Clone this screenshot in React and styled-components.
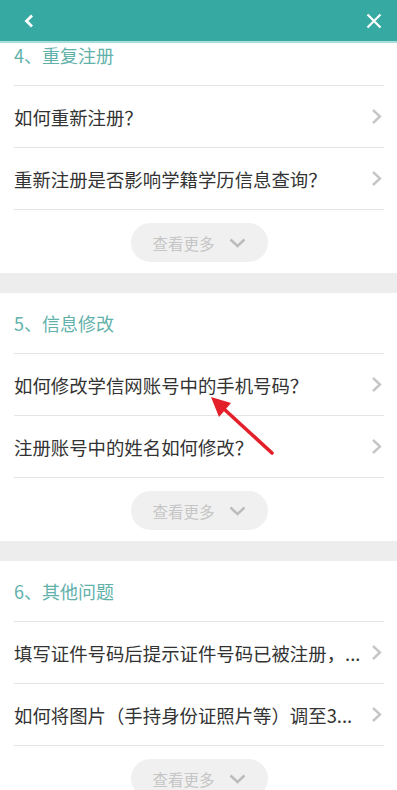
import React from "react";
import styled, { createGlobalStyle } from "styled-components";

const Global = createGlobalStyle`
  html, body { margin: 0; padding: 0; }
  body {
    font-family: "Noto Sans CJK SC", "Noto Sans", "Liberation Sans", sans-serif;
    background: #ffffff;
  }
  * { box-sizing: border-box; }
`;

const Page = styled.div`
  position: relative;
  width: 397px;
  height: 790px;
  overflow: hidden;
  display: flex;
  flex-direction: column;
  gap: 20px;
  background: #ededed;
`;

const TopArea = styled.div`
  display: flex;
  flex-direction: column;
  background: #fff;
`;

const Header = styled.header`
  height: 43px;
  flex-shrink: 0;
  background: #36a9a2;
  border-bottom: 2px solid #aadcd8;
  display: flex;
  align-items: center;
  justify-content: space-between;
  padding: 0 15px 0 24px;
`;

const IconBtn = styled.span`
  display: flex;
  align-items: center;
  justify-content: center;
`;

const Section = styled.section`
  background: #fff;
  display: flex;
  flex-direction: column;
  flex-shrink: 0;
`;

const List = styled.div`
  margin: 0 13px 0 14px;
  display: flex;
  flex-direction: column;
`;

const Title = styled.div`
  height: ${(p) => (p.$clipped ? "43px" : "61px")};
  display: flex;
  align-items: ${(p) => (p.$clipped ? "flex-start" : "center")};
  border-bottom: 1px solid #e4e4e4;
  font-size: 18px;
  line-height: 24px;
  color: #62b2ab;
  padding-bottom: ${(p) => (p.$clipped ? "0" : "1px")};
`;

const Row = styled.div`
  height: 62px;
  display: flex;
  align-items: center;
  justify-content: space-between;
  border-bottom: 1px solid #e4e4e4;
  gap: 4px;
`;

const RowText = styled.span`
  flex: 1;
  min-width: 0;
  font-size: 18.4px;
  color: #333333;
  white-space: nowrap;
  overflow: hidden;
`;

const Chevron = styled.svg`
  flex-shrink: 0;
  margin-right: 2px;
`;

const MoreArea = styled.div`
  height: 63px;
  display: flex;
  justify-content: center;
  padding-top: 13px;
`;

const MoreButton = styled.div`
  width: 137px;
  height: 39px;
  border-radius: 20px;
  background: #f0f0f0;
  display: flex;
  align-items: center;
  justify-content: center;
  gap: 14px;
  font-size: 15.5px;
  color: #c6c6c6;
`;

const Arrow = styled.svg`
  position: absolute;
  left: 0;
  top: 0;
  pointer-events: none;
`;

const RightChevron = () => (
  <Chevron width="11" height="17" viewBox="0 0 11 17">
    <polyline points="2,2 9,8.5 2,15" fill="none" stroke="#c6c6c6" strokeWidth="2.4" />
  </Chevron>
);

const DownChevron = () => (
  <svg width="17" height="10" viewBox="0 0 17 10">
    <polyline points="1.5,1.5 8.5,8 15.5,1.5" fill="none" stroke="#bcbcbc" strokeWidth="2.4" />
  </svg>
);

const sections = [
  {
    title: "4、重复注册",
    clipped: true,
    items: ["如何重新注册？", "重新注册是否影响学籍学历信息查询？"],
  },
  {
    title: "5、信息修改",
    items: ["如何修改学信网账号中的手机号码？", "注册账号中的姓名如何修改？"],
  },
  {
    title: "6、其他问题",
    items: ["填写证件号码后提示证件号码已被注册，...", "如何将图片（手持身份证照片等）调至3..."],
  },
];

const SectionBlock = ({ title, clipped, items }) => (
  <List>
    <Title $clipped={clipped}>{title}</Title>
    {items.map((t) => (
      <Row key={t}>
        <RowText>{t}</RowText>
        <RightChevron />
      </Row>
    ))}
    <MoreArea>
      <MoreButton>
        <span>查看更多</span>
        <DownChevron />
      </MoreButton>
    </MoreArea>
  </List>
);

export default function App() {
  const [first, ...rest] = sections;
  return (
    <>
      <Global />
      <Page>
        <TopArea>
          <Header>
            <IconBtn>
              <svg width="10" height="14" viewBox="0 0 10 14">
                <polyline points="8,1.5 2.5,7 8,12.5" fill="none" stroke="#fff" strokeWidth="2.8" />
              </svg>
            </IconBtn>
            <IconBtn>
              <svg width="16" height="16" viewBox="0 0 16 16">
                <path d="M1.5 1.5 L14.5 14.5 M14.5 1.5 L1.5 14.5" stroke="#fff" strokeWidth="2.2" />
              </svg>
            </IconBtn>
          </Header>
          <SectionBlock {...first} />
        </TopArea>
        {rest.map((s) => (
          <Section key={s.title}>
            <SectionBlock {...s} />
          </Section>
        ))}
        <Arrow width="397" height="790" viewBox="0 0 397 790">
          <line x1="272" y1="453" x2="224" y2="409" stroke="#e3202a" strokeWidth="3.6" strokeLinecap="round" />
          <polygon points="211,397 231,403 219,417" fill="#e3202a" />
        </Arrow>
      </Page>
    </>
  );
}
